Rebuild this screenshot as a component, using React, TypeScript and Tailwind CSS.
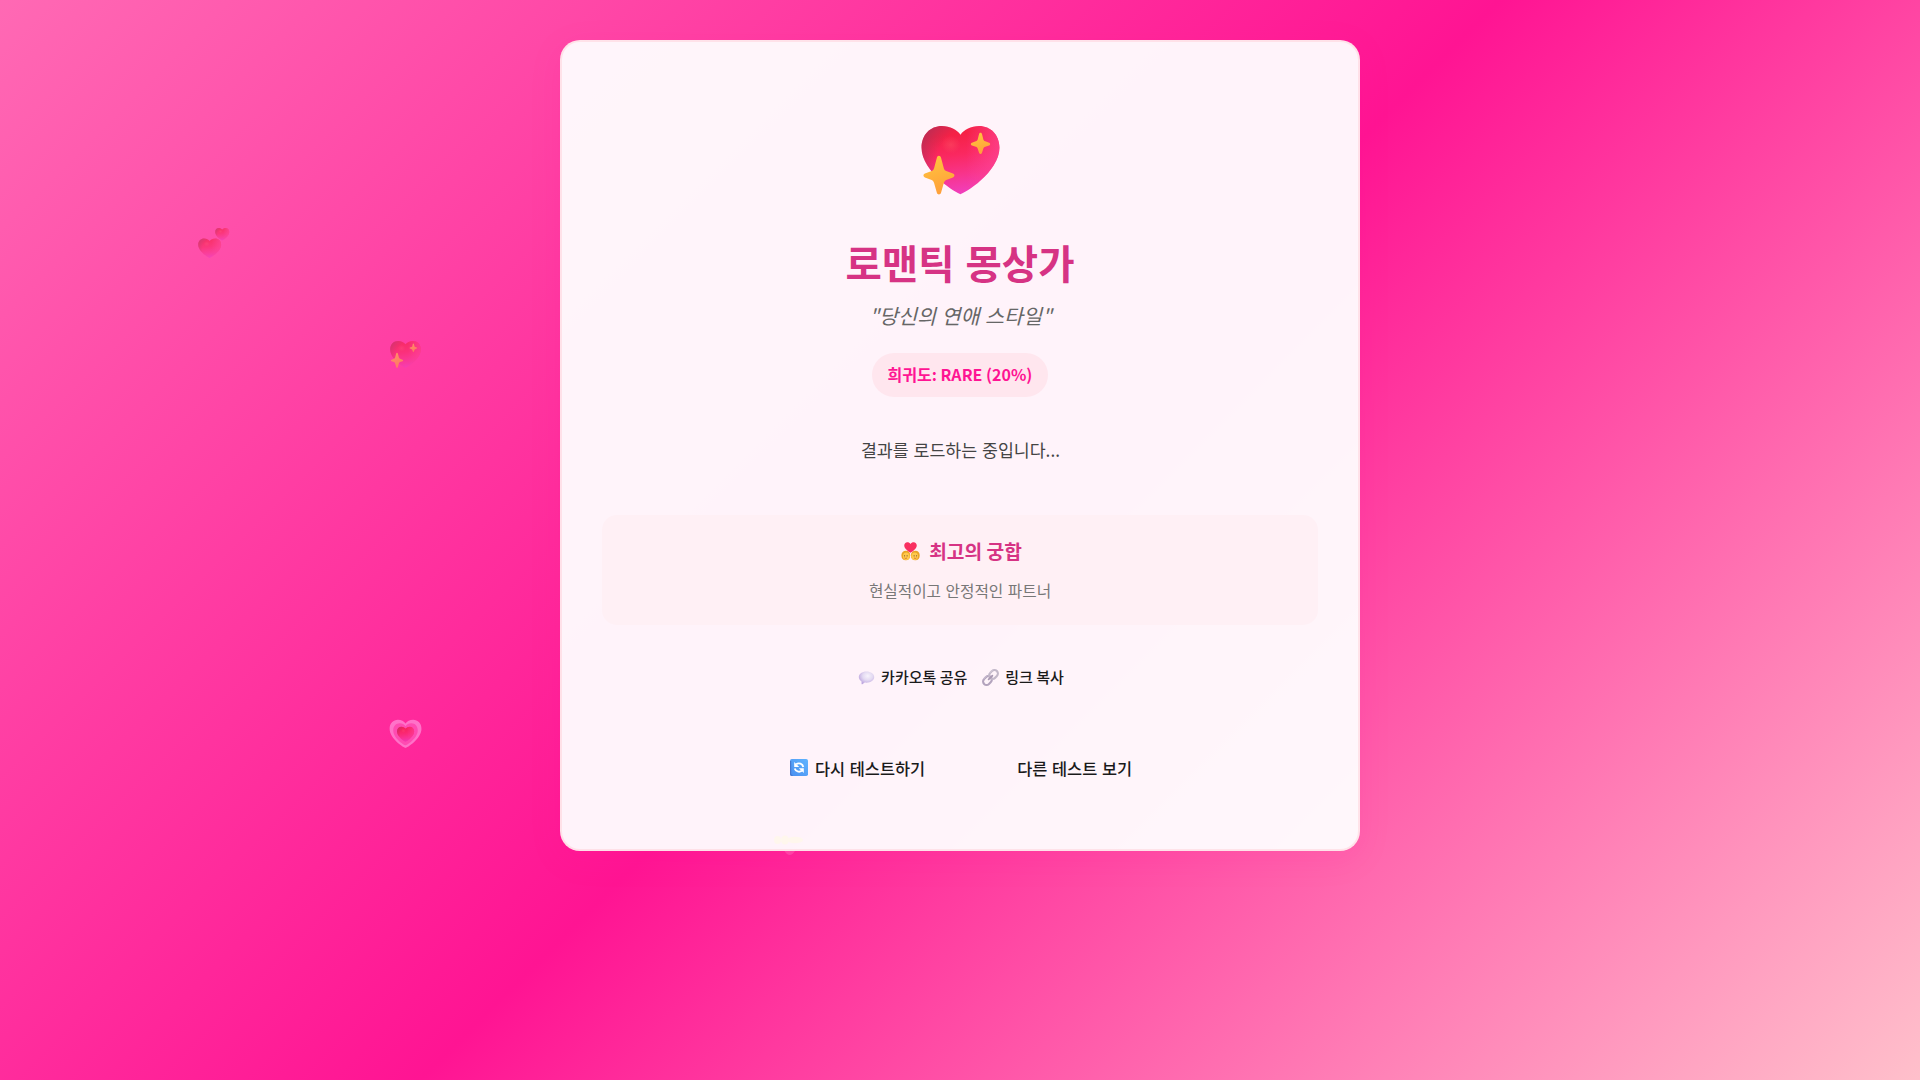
import { useId } from 'react';

const HEART = 'M16 30C14.9 30 2 21.2 2 11.3C2 6 5.2 2.5 9.3 2.5C12.3 2.5 14.7 4 16 6C17.3 4 19.7 2.5 22.7 2.5C26.8 2.5 30 6 30 11.3C30 21.2 17.1 30 16 30Z';

function HeartShape() {
  const id = useId();
  return (
    <>
      <defs>
        <linearGradient id={id + 'a'} x1="14" y1="3" x2="18" y2="30" gradientUnits="userSpaceOnUse">
          <stop offset="0.1" stopColor="#f52146" />
          <stop offset="0.4" stopColor="#fa2860" />
          <stop offset="0.7" stopColor="#f8348c" />
          <stop offset="1" stopColor="#f03fc0" />
        </linearGradient>
        <radialGradient id={id + 'b'} cx="23" cy="18" r="24" gradientUnits="userSpaceOnUse">
          <stop offset="0.66" stopColor="#a83058" stopOpacity="0" />
          <stop offset="1" stopColor="#a83058" stopOpacity="0.75" />
        </radialGradient>
        <radialGradient id={id + 'c'} cx="12.500" cy="10" r="3.500" gradientUnits="userSpaceOnUse">
          <stop offset="0" stopColor="#ff5a68" stopOpacity="0.4" />
          <stop offset="1" stopColor="#ff5a68" stopOpacity="0" />
        </radialGradient>
        <linearGradient id={id + 'd'} x1="18" y1="0" x2="31" y2="0" gradientUnits="userSpaceOnUse">
          <stop offset="0" stopColor="#ff4594" stopOpacity="0" />
          <stop offset="1" stopColor="#ff4594" stopOpacity="0.75" />
        </linearGradient>
      </defs>
      <path d={HEART} fill={`url(#${id}a)`} />
      <path d={HEART} fill={`url(#${id}d)`} />
      <path d={HEART} fill={`url(#${id}b)`} />
      <path d={HEART} fill={`url(#${id}c)`} />
    </>
  );
}

function SparklingHeart({ className }: { className: string }) {
  const id = useId();
  return (
    <svg viewBox="0 0 32 32" className={className}>
      <defs>
        <linearGradient id={id} x1="0" y1="0" x2="0.3" y2="1">
          <stop stopColor="#ffc83f" />
          <stop offset="1" stopColor="#ffa13a" />
        </linearGradient>
      </defs>
      <g transform="translate(0 1.4) scale(1 0.89)"><HeartShape /></g>
      <g fill={`url(#${id})`} transform="translate(.2 -.3)">
        <path d="M8 14.600c.4 0 .7.3.8.7l1 3.800c.15.6.5.9 1.100 1.100l2.200.8c.7.3.7 1.100 0 1.400l-2.200.8c-.6.2-.95.6-1.100 1.200l-1 3.500c-.2.8-1.300.8-1.500 0l-1-3.500c-.15-.6-.5-1-1.100-1.200L3 22.400c-.7-.3-.7-1.100 0-1.400l2.200-.8c.6-.2.95-.5 1.100-1.100l1-3.800c.1-.4.4-.7.7-.7Z" />
        <path d="M23 6.300c.3 0 .4.2.5.4l.5 2c.1.4.3.6.7.7l1.400.5c.5.2.5.8 0 1l-1.400.5c-.4.1-.6.3-.7.7l-.5 1.500c-.2.5-.8.5-1 0l-.5-1.500c-.1-.4-.3-.6-.7-.7l-1.400-.5c-.5-.2-.5-.8 0-1l1.400-.5c.4-.1.6-.3.7-.7l.5-2c.1-.2.2-.4.5-.4Z" />
      </g>
    </svg>
  );
}

function TwoHearts({ className }: { className: string }) {
  return (
    <svg viewBox="0 0 32 32" className={className}>
      <g transform="translate(-.4 10.2) scale(.77 .66)"><HeartShape /></g>
      <g transform="translate(16.2 .8) scale(.47 .43)"><HeartShape /></g>
    </svg>
  );
}

function GrowingHeart({ className }: { className: string }) {
  return (
    <svg viewBox="0 0 32 32" className={className}>
      <path d={HEART} transform="translate(-.6 .2) scale(1.04 .94)" fill="#ff92dc" />
      <path d={HEART} transform="translate(3.200 4) scale(.8 .73)" fill="#ff5abc" />
      <g transform="translate(7.100 7.600) scale(.56 .5)"><HeartShape /></g>
    </svg>
  );
}

function Couple({ className }: { className: string }) {
  return (
    <svg viewBox="0 0 20 20" className={className}>
      {[5, 15].map((x) => (
        <g key={x}>
          <path d={`M${x - 4.6} 14c0-3 2-4.800 4.800-4.800s4.500 2 4.500 4.800c0 3.500-1.600 5.300-4.600 5.300s-4.700-1.800-4.700-5.300Z`} fill="#eaa526" />
          <ellipse cx={x + (x < 10 ? 0.6 : -0.6)} cy="15" rx="3.500" ry="3.900" fill="#ffc94b" />
          <circle cx={x - 1.2} cy="14.600" r=".55" fill="#65402d" />
          <circle cx={x + 1.4} cy="14.600" r=".55" fill="#65402d" />
          <path d={`M${x - 1.3} 16.800q1.300 1.100 2.600 0`} stroke="#c0392b" strokeWidth=".6" fill="none" />
        </g>
      ))}
      <path d="M10 11.200C8.500 10.500 3.400 7.500 3.400 3.800c0-2.100 1.400-3.600 3.200-3.600 1.500 0 2.700.7 3.400 1.800.7-1.100 1.900-1.800 3.400-1.800 1.800 0 3.200 1.500 3.200 3.600 0 3.700-5.100 6.700-6.600 7.400Z" fill="#f92f60" />
    </svg>
  );
}

function Speech({ className }: { className: string }) {
  return (
    <svg viewBox="0 0 32 32" className={className}>
      <defs>
        <radialGradient id="speech" cx=".58" cy=".35" r=".65">
          <stop stopColor="#f7f3fc" />
          <stop offset=".5" stopColor="#e4daf2" />
          <stop offset="1" stopColor="#bda5df" />
        </radialGradient>
      </defs>
      <path d="M16 4.500C8 4.500 1.500 9 1.500 15c0 3.500 2 6.500 5.200 8.500v4.500c0 .8.900 1.200 1.600.7l4.200-3.200c1.100.2 2.300.3 3.500.3 8 0 14.500-4.700 14.500-10.800S24 4.500 16 4.500Z" fill="url(#speech)" />
    </svg>
  );
}

function Chain({ className }: { className: string }) {
  return (
    <svg viewBox="0 0 32 32" className={className} fill="none" strokeLinecap="round">
      <g transform="rotate(-45 16 16)">
        <rect x="-1" y="9.500" width="18" height="13" rx="6.500" stroke="#b3a3bd" strokeWidth="4" />
        <rect x="15" y="9.500" width="18" height="13" rx="6.500" stroke="#c3b8c9" strokeWidth="4" />
        <path d="M11 16h10" stroke="#a999b3" strokeWidth="3.400" />
        <path d="M5 8.800h7M21 8.800h7" stroke="#ddd5e2" strokeWidth="1.200" />
      </g>
    </svg>
  );
}

function Refresh({ className }: { className: string }) {
  return (
    <svg viewBox="0 0 18 18" className={className}>
      <defs>
        <linearGradient id="refresh" x1="1" y1="0" x2="0" y2="1">
          <stop stopColor="#60b4ff" />
          <stop offset="1" stopColor="#4a8ff0" />
        </linearGradient>
      </defs>
      <rect width="18" height="17" rx="1.800" fill="url(#refresh)" />
      <path d="M0 2v13q0 2 2 2h1L1.200 15V2Z" fill="#4678cf" />
      <path d="M6.200 5.200A4.600 4.600 0 0 1 13.300 8M11.800 11.800A4.600 4.600 0 0 1 4.700 9.500" fill="none" stroke="#fff" strokeWidth="1.900" />
      <path d="M4.200 3v5h5ZM13.800 14V9.200h-5Z" fill="#fff" />
    </svg>
  );
}

function FadingHeart({ className }: { className: string }) {
  return (
    <svg viewBox="0 0 34 34" className={className}>
      <g fill="#fffbe6" opacity=".6">
        <ellipse cx="5.500" cy="15" rx="3.500" ry="4" />
        <ellipse cx="13" cy="15" rx="4" ry="4.500" />
        <ellipse cx="23" cy="15" rx="8" ry="3.200" />
      </g>
      <path d="M12.500 26q2.500 4 5.200 4t5.300-4Z" fill="#ff8ccb" opacity=".3" />
    </svg>
  );
}

export default function App() {
  return (
    <div className="relative h-[1080px] overflow-hidden bg-[linear-gradient(135deg,#ff69b4_0%,#ff1493_50%,#ffc0cb_100%)] pt-10 font-['Noto_Sans_CJK_KR',sans-serif]">
      <TwoHearts className="absolute left-[197px] top-[226px] size-[34px] opacity-60" />
      <SparklingHeart className="absolute left-[388px] top-[337px] size-[35px] opacity-60" />
      <GrowingHeart className="absolute left-[388px] top-[717px] size-[35px] opacity-70" />

      <main className="mx-auto flex h-[811px] w-[800px] flex-col items-center rounded-[20px] border-2 border-[#ffb6c1]/30 bg-white/95 px-[38px] pt-[38px] text-center shadow-[0_8px_32px_rgba(255,20,147,0.1)]">
        <SparklingHeart className="mt-9 size-[89px]" />
        <h1 className="mt-[25px] text-[39.500px] font-bold leading-[64px] text-[#d63384] [word-spacing:2px]">로맨틱 몽상가</h1>
        <p className="mt-[5px] pl-px text-[20.600px] italic leading-[33px] text-[#666] [word-spacing:1px]">"당신의 연애 스타일"</p>
        <div className="mt-[21px] flex h-11 items-center rounded-[22px] bg-[#ffe6ee] px-4 pb-[2px] text-[16px] font-bold text-[#ff1493]">희귀도: RARE (20%)</div>
        <p className="mt-[37px] pl-px text-[17.300px] leading-[32px] text-[#444] [word-spacing:1px]">결과를 로드하는 중입니다...</p>
        <section className="mt-[49px] flex h-[110px] w-[716px] flex-col items-center rounded-[15px] bg-[#fff0f5] pt-[21px]">
          <h3 className="flex items-center gap-[9px] pl-[3px] text-[19.200px] font-bold leading-[31px] text-[#d63384]">
            <Couple className="size-[19px]" />최고의 궁합
          </h3>
          <p className="mt-[11px] text-[15.700px] leading-[26px] text-[#777] [word-spacing:1px]">현실적이고 안정적인 파트너</p>
        </section>
        <div className="mt-10 flex h-6 items-center gap-[15px] pl-0.5 text-[15px] font-medium text-[#1a1a1a]">
          <span className="flex items-center gap-[6px]"><Speech className="size-[17px]" />카카오톡 공유</span>
          <span className="flex items-center gap-[6px]"><Chain className="size-[17px]" />링크 복사</span>
        </div>
        <div className="mt-[65px] flex h-7 items-center gap-[92px] pl-0.5 text-[16.400px] font-medium text-[#1a1a1a] [word-spacing:1px]">
          <span className="flex items-center gap-[7px]"><Refresh className="size-[18px]" />다시 테스트하기</span>
          <span>다른 테스트 보기</span>
        </div>
      </main>
      <FadingHeart className="absolute left-[772px] top-[825px] size-[34px]" />
    </div>
  );
}
